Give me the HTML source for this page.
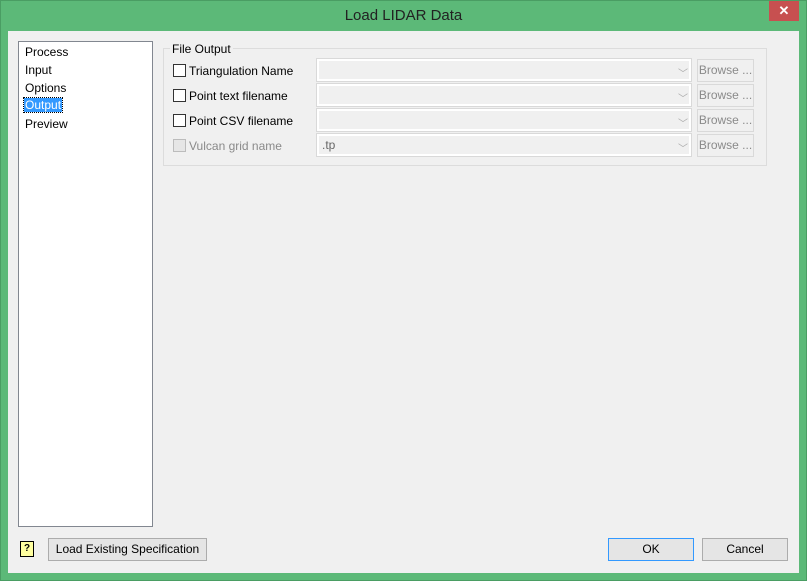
<!DOCTYPE html><html><head><style>
body{margin:0;width:807px;height:581px;background:#5cb978;font-family:"Liberation Sans",sans-serif;font-size:12px;position:relative;overflow:hidden}
.a{position:absolute}
.win{left:0;top:0;width:805px;height:579px;border:1px solid #4a9d63}
.cl{left:8px;top:31px;width:791px;height:542px;background:#f0f0f0}
.title{left:0;top:7px;width:807px;text-align:center;font-size:15px;color:#222}
.close{left:769px;top:1px;width:30px;height:20px;background:#c75050;color:#fff;text-align:center;font-size:13px;line-height:20px;font-weight:bold}
.list{left:18px;top:41px;width:133px;height:484px;background:#fff;border:1px solid #828790}
.li{left:25px;font-size:12px;color:#000}
.grp{left:163px;top:48px;width:602px;height:116px;border:1px solid #dcdcdc}
.cb{left:173px;width:11px;height:11px;border:1px solid #333;background:#fff}
.lab{left:189px;font-size:12px;color:#000}
.combo{left:316px;width:374px;height:22px;border:1px solid #d9d9d9;background:#f0f0f0;box-shadow:inset 0 0 0 2px #fff}
.arr{left:678px;color:#aaa;font-size:10px}
.br{left:697px;width:55px;height:21px;border:1px solid #d9d9d9;color:#8a8a8a;text-align:center;line-height:21px;font-size:12px}
.btn{height:21px;border:1px solid #acacac;background:#e5e5e5;text-align:center;line-height:21px;font-size:12px;color:#000}
</style></head><body>
<div class="a win"></div>
<div class="a title">Load LIDAR Data</div>
<div class="a close">✕</div>
<div class="a cl"></div>
<div class="a list"></div>
<div class="a li" style="top:45px">Process</div>
<div class="a li" style="top:63px">Input</div>
<div class="a li" style="top:81px">Options</div>
<div class="a li" style="top:98px;left:24px;background:#3399ff;color:#fff;padding:0 1px;outline:1px dotted #000">Output</div>
<div class="a li" style="top:117px">Preview</div>
<div class="a grp"></div>
<div class="a" style="left:170px;top:42px;background:#f0f0f0;padding:0 2px">File Output</div>
<div class="a cb" style="top:64px"></div><div class="a lab" style="top:64px">Triangulation Name</div>
<div class="a cb" style="top:89px"></div><div class="a lab" style="top:89px">Point text filename</div>
<div class="a cb" style="top:114px"></div><div class="a lab" style="top:114px">Point CSV filename</div>
<div class="a cb" style="top:139px;border-color:#bcbcbc;background:#e6e6e6"></div><div class="a lab" style="top:139px;color:#8a8a8a">Vulcan grid name</div>
<div class="a combo" style="top:58px"></div><div class="a arr" style="top:65px">﹀</div><div class="a br" style="top:59px">Browse ...</div>
<div class="a combo" style="top:83px"></div><div class="a arr" style="top:90px">﹀</div><div class="a br" style="top:84px">Browse ...</div>
<div class="a combo" style="top:108px"></div><div class="a arr" style="top:115px">﹀</div><div class="a br" style="top:109px">Browse ...</div>
<div class="a combo" style="top:133px"></div><div class="a arr" style="top:140px">﹀</div><div class="a br" style="top:134px">Browse ...</div>
<div class="a" style="left:322px;top:138px;color:#666">.tp</div>
<div class="a" style="left:20px;top:541px;width:12px;height:14px;background:#ffffa0;border:1px solid #000;font-size:10px;text-align:center;line-height:14px;font-weight:bold">?</div>
<div class="a btn" style="left:48px;top:538px;width:157px">Load Existing Specification</div>
<div class="a btn" style="left:608px;top:538px;width:84px;border-color:#3399ff">OK</div>
<div class="a btn" style="left:702px;top:538px;width:84px">Cancel</div>
</body></html>
